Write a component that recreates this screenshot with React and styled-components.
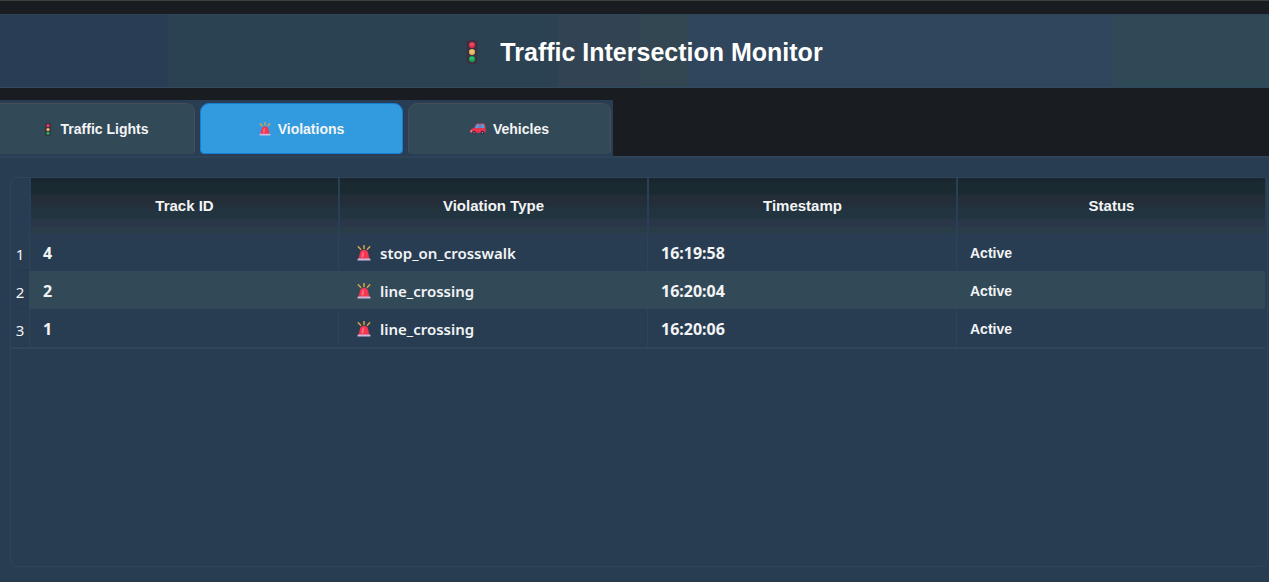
import React, { useState } from "react";
import styled, { createGlobalStyle } from "styled-components";

const GlobalStyle = createGlobalStyle`
  * { box-sizing: border-box; }
  body {
    margin: 0;
    background: #191c20;
    color: #f2f4f5;
    font-family: "Liberation Sans", Arial, sans-serif;
  }
`;

const Window = styled.div`
  display: flex;
  flex-direction: column;
  min-height: 100vh;
  border-top: 1px solid #3e423f;
`;

const Header = styled.header`
  display: flex;
  align-items: center;
  justify-content: center;
  gap: 22px;
  height: 74px;
  margin: 13px 0 12px;
  padding: 2px 0 0 20px;
  border-top: 1px solid #2c4657;
  border-bottom: 1px solid #304a5f;
  background: linear-gradient(
    90deg,
    #293e54 13.2%, #2b4252 13.2% 44%, #324354 44% 50.4%,
    #334752 50.4% 54.1%, #30465c 54.1% 87.6%, #304957 87.6%
  );
`;

const Title = styled.h1`
  margin: 0;
  font-size: 25px;
  line-height: 32px;
  font-weight: 700;
  color: #fff;
`;

const TabBar = styled.div`
  display: flex;
  align-self: flex-start;
  gap: 5px;
  padding: 3px 2px 2px 0;
  background: #293e54;
`;

const Tab = styled.button`
  display: flex;
  align-items: center;
  justify-content: center;
  gap: 7px;
  width: 203px;
  height: 51px;
  padding: 1px 0 0;
  border: 1px solid ${(p) => (p.$active ? "#1580d0" : "#484f54")};
  border-bottom-color: ${(p) => (p.$active ? "#1580d0" : "#344a58")};
  border-radius: 9px 9px 4px 4px;
  background: ${(p) => (p.$active ? "#329bdf" : "#324958")};
  color: #f2f4f5;
  font: 700 14px/18px "Liberation Sans", Arial, sans-serif;

  &:first-child {
    width: 195px;
    padding-right: 2px;
    border-left: 0;
    border-radius: 0 9px 4px 0;
    gap: 9px;
  }
`;

const Panel = styled.main`
  display: flex;
  flex: 1;
  padding: 19px 1px 14px 10px;
  border-top: 2px solid #2d4358;
  border-bottom: 1px solid #26384c;
  background: #293d52;
`;

const Frame = styled.div`
  flex: 1;
  padding-right: 2px;
  border: 1px solid #2f455a;
  border-radius: 8px;
`;

const Table = styled.table`
  width: 100%;
  table-layout: fixed;
  border-collapse: separate;
  border-spacing: 0;
  border-bottom: 2px solid #2e4758;
`;

const NumberColumn = styled.col`
  width: 18px;
`;

const HeadCell = styled.th`
  height: 55px;
  padding: 0;
  border-left: 2px solid #293f57;
  background: linear-gradient(
    #19252f 4px, #1a2a31 4px 15px, #232e38 19px 26px,
    #223440 32px 40px, #293748 42px 48px, #2b3c49 50px
  );
  font-size: 15px;
  line-height: 18px;
`;

const CornerCell = styled.td`
  padding: 0;
`;

const Row = styled.tr`
  height: 38px;
`;

const RowNumber = styled.th`
  padding: 4px 0 0;
  border-bottom: 1px solid #26394d;
  font: 400 15px/22px "Noto Sans", sans-serif;
  text-align: center;
`;

const Cell = styled.td`
  height: 38px;
  padding: 2px 0 0 13px;
  border-left: 1px solid ${(p) => (p.$striped ? "#324958" : "#2d4358")};
  background: ${(p) => (p.$striped ? "#324958" : "#293d52")};
  font: ${(p) => (p.$numeric ? '700 16px/22px "Noto Sans"' : '700 14px/22px "Liberation Sans"')}, sans-serif;
`;

const Violation = styled.span`
  display: flex;
  align-items: center;
  gap: 9px;
  padding-left: 5px;
  font: 600 15px/22px "Noto Sans", sans-serif;
`;

function TrafficLight({ width, height }) {
  return (
    <svg width={width} height={height} viewBox="0 0 12 24" aria-hidden="true">
      <rect x="0.5" width="11" height="24" rx="3.5" fill="#3c3042" />
      <circle cx="6" cy="5" r="3" fill="#e5304a" />
      <circle cx="6" cy="12" r="3" fill="#e6b65c" />
      <circle cx="6" cy="19" r="3" fill="#12aa57" />
      <path d="M4.4 4.2h3M4.4 11.2h3M4.4 18.2h3" stroke="#fff" strokeOpacity="0.35" strokeWidth="1" />
    </svg>
  );
}

function Siren({ width, height }) {
  return (
    <svg width={width} height={height} viewBox="0 0 14 16" aria-hidden="true">
      <path d="M7 0.5v3M1.3 1.8l2.3 2.4M12.7 1.8l-2.3 2.4" stroke="#d9a548" strokeWidth="1.5" strokeLinecap="round" />
      <path d="M1.6 14l1.3-6Q3.8 4.8 7 4.8T11.1 8l1.3 6z" fill="#f43650" />
      <path d="M5.1 8.5Q5.5 6.6 7 6.5l-.6 5.8H4.5z" fill="#ff7187" />
      <rect x="0.5" y="13.4" width="13" height="2.2" rx="0.9" fill="#cdb7dd" />
    </svg>
  );
}

function Car() {
  return (
    <svg width="16" height="12" viewBox="0 0 16 12" aria-hidden="true">
      <path d="M0.5 9.7V7.2Q1 5.4 4 5L6 1.2Q6.4.5 7.3.5h6.5q1 0 1.2 1l.6 4v4.2z" fill="#e93450" />
      <path d="M4.8 5 6.6 1.3h3v3.7zM10.4 1.3h3.6l.6 3.7h-4.2z" fill="#4f9bdc" />
      <path d="M.3 8.2h2" stroke="#f5b6bb" strokeWidth="1" />
      <circle cx="4" cy="9.7" r="1.9" fill="#352b48" />
      <circle cx="12.5" cy="9.7" r="1.9" fill="#352b48" />
      <circle cx="4" cy="9.7" r=".7" fill="#a99bb5" />
      <circle cx="12.5" cy="9.7" r=".7" fill="#a99bb5" />
    </svg>
  );
}

const tabs = [
  { label: "Traffic Lights", icon: <TrafficLight width={8} height={13} /> },
  { label: "Violations", icon: <Siren width={12} height={14} /> },
  { label: "Vehicles", icon: <Car /> },
];

const violations = [
  { id: 4, type: "stop_on_crosswalk", time: "16:19:58", status: "Active" },
  { id: 2, type: "line_crossing", time: "16:20:04", status: "Active" },
  { id: 1, type: "line_crossing", time: "16:20:06", status: "Active" },
];

export default function App() {
  const [selected, setSelected] = useState(1);
  return (
    <>
      <GlobalStyle />
      <Window>
        <Header>
          <TrafficLight width={12} height={24} />
          <Title>Traffic Intersection Monitor</Title>
        </Header>
        <TabBar role="tablist">
          {tabs.map((tab, i) => (
            <Tab
              key={tab.label}
              type="button"
              role="tab"
              aria-selected={selected === i}
              $active={selected === i}
              onClick={() => setSelected(i)}
            >
              {tab.icon}
              {tab.label}
            </Tab>
          ))}
        </TabBar>
        <Panel>
          <Frame>
            <Table>
              <colgroup>
                <NumberColumn />
                <col />
                <col />
                <col />
                <col />
              </colgroup>
              <thead>
                <tr>
                  <CornerCell />
                  <HeadCell scope="col">Track ID</HeadCell>
                  <HeadCell scope="col">Violation Type</HeadCell>
                  <HeadCell scope="col">Timestamp</HeadCell>
                  <HeadCell scope="col">Status</HeadCell>
                </tr>
              </thead>
              <tbody>
                {violations.map((v, i) => {
                  const striped = i % 2 === 1;
                  return (
                    <Row key={v.id}>
                      <RowNumber scope="row">{i + 1}</RowNumber>
                      <Cell $numeric $striped={striped}>{v.id}</Cell>
                      <Cell $striped={striped}>
                        <Violation>
                          <Siren width={14} height={16} />
                          {v.type}
                        </Violation>
                      </Cell>
                      <Cell $numeric $striped={striped}>{v.time}</Cell>
                      <Cell $striped={striped}>{v.status}</Cell>
                    </Row>
                  );
                })}
              </tbody>
            </Table>
          </Frame>
        </Panel>
      </Window>
    </>
  );
}
